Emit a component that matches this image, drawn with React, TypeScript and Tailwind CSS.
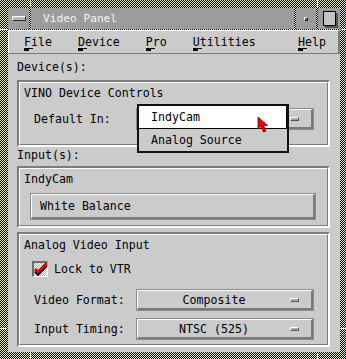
import type { ReactNode } from 'react'

const dither =
  'bg-[repeating-conic-gradient(#000_0_25%,#e6e6d2_0_50%)] bg-[length:2px_2px]'
const font = "font-['DejaVu_Sans_Mono',monospace] text-[11.6px] leading-[16px] text-black"

function Mnemonic({ children }: { children: string }): JSX.Element {
  return (
    <span className="relative inline-block">
      {children}
      <span className="absolute left-0 top-[14px] h-[1px] w-[9px] bg-black" />
      <span className="absolute left-0 top-[15px] h-[2px] w-[5px] bg-black" />
    </span>
  )
}

function MenuItem({ label, className }: { label: string; className?: string }): JSX.Element {
  return (
    <span className={className}>
      <Mnemonic>{label[0]}</Mnemonic>
      {label.slice(1)}
    </span>
  )
}

function Frame({ title, children, className }: { title: string; children: ReactNode; className?: string }): JSX.Element {
  return (
    <div className={`ml-[9px] mr-[10px] border-2 border-b-white border-l-[#7c7c7c] border-r-white border-t-[#7c7c7c] ${className ?? ''}`}>
      <div className="border border-b-[#7c7c7c] border-l-white border-r-[#7c7c7c] border-t-white px-[4px] pt-[2px]">
        <div>{title}</div>
        {children}
      </div>
    </div>
  )
}

function OptionButton({ value, hidden, className }: { value: string; hidden?: boolean; className?: string }): JSX.Element {
  return (
    <div className={`h-[22px] w-[178px] border border-[#8a8a8a] ${className ?? ''}`}>
      <div className="flex h-full items-center border-b-2 border-l border-r-2 border-t border-b-[#7a7a7a] border-l-white border-r-[#7a7a7a] border-t-white">
        <span className={`flex-1 text-center ${hidden ? 'invisible' : ''}`}>{value}</span>
        <span className="mr-[12px] h-[4px] w-[9px] border-b border-l border-r border-t border-b-[#555] border-l-white border-r-[#555] border-t-white bg-[#a8a8a8]" />
      </div>
    </div>
  )
}

function Checkbox(): JSX.Element {
  return (
    <div className="relative h-[16px] w-[16px] border-b border-l-2 border-r border-t-2 border-b-white border-l-[#6e6e6e] border-r-white border-t-[#6e6e6e]">
      <div className="h-full w-full bg-[repeating-conic-gradient(#ffffff_0_25%,#b4b4b4_0_50%)] bg-[length:2px_2px]" />
      <svg className="absolute left-[-1px] top-[-2px]" width="17" height="16" viewBox="0 0 17 16">
        <polyline points="2,9 5,12 14,3" fill="none" stroke="#000" strokeWidth="2.4" transform="translate(0,1.5)" />
        <polyline points="2,8 5,11 14,2" fill="none" stroke="#e00000" strokeWidth="2.8" />
      </svg>
    </div>
  )
}

export default function App(): JSX.Element {
  return (
    <div className={`relative h-[359px] w-[346px] overflow-hidden pb-[7px] pl-[8px] pr-[6px] pt-[8px] ${dither} ${font}`}>
      {/* resize handle ticks */}
      <span className="absolute left-[30px] top-0 h-[7px] w-[1px] bg-[#f4f4cc]" />
      <span className="absolute left-[317px] top-0 h-[7px] w-[1px] bg-[#f4f4cc]" />
      <span className="absolute left-0 top-[29px] h-[1px] w-[7px] bg-[#f4f4cc]" />
      <span className="absolute right-0 top-[29px] h-[1px] w-[5px] bg-[#f4f4cc]" />
      <span className="absolute left-0 top-[328px] h-[1px] w-[7px] bg-[#f4f4cc]" />
      <span className="absolute right-0 top-[328px] h-[1px] w-[5px] bg-[#f4f4cc]" />
      <span className="absolute bottom-0 left-[30px] h-[6px] w-[1px] bg-[#f4f4cc]" />
      <span className="absolute bottom-0 left-[317px] h-[6px] w-[1px] bg-[#f4f4cc]" />

      <div className="flex h-full flex-col gap-[1px]">
        {/* title bar */}
        <div className="flex h-[21px] gap-[2px]">
          <div className="flex w-[21px] items-center justify-center bg-[#9c9c9c]">
            <span className="h-[5px] w-[14px] border border-b-[#333] border-l-white border-r-[#333] border-t-white bg-[#b8b8b8]" />
          </div>
          <div className="flex flex-1 items-center bg-[#9c9c9c] pl-[12px] text-[11.2px] text-[#f4f4f4]">
            Video Panel
          </div>
          <div className="flex w-[20px] items-center justify-center bg-[#9c9c9c]">
            <span className="h-[4px] w-[4px] border border-b-[#222] border-l-white border-r-[#222] border-t-white bg-[#666]" />
          </div>
          <div className="flex w-[22px] items-center justify-center bg-[#9c9c9c]">
            <span className="h-[15px] w-[13px] border border-black bg-[#c4c4c4] shadow-[2px_2px_0_#555]" />
          </div>
        </div>

        {/* main window */}
        <div className="flex flex-1 flex-col bg-[#cbcbcb]">
          <div className="flex h-[24px] items-center gap-[26px] border-b border-l border-r-2 border-t border-b-[#7a7a7a] border-l-white border-r-[#7a7a7a] border-t-white pl-[15px] pr-[12px]">
            <MenuItem label="File" />
            <MenuItem label="Device" />
            <MenuItem label="Pro" />
            <MenuItem label="Utilities" />
            <MenuItem label="Help" className="ml-auto" />
          </div>

          <div className="mb-[5px] ml-[9px] mt-[5px]">Device(s):</div>
          <Frame title="VINO Device Controls">
            <div className="mb-[14px] mt-[7px] flex items-center pl-[10px]">
              <span className="w-[102px]">Default In:</span>
              <OptionButton value="IndyCam" hidden />
            </div>
          </Frame>

          <div className="mb-[3px] ml-[9px]">Input(s):</div>
          <Frame title="IndyCam">
            <div className="mb-[5px] ml-[6px] mr-[7px] mt-[6px] h-[27px] border border-[#8a8a8a]">
              <div className="flex h-full items-center border-b-2 border-l border-r-2 border-t border-b-[#7a7a7a] border-l-white border-r-[#7a7a7a] border-t-white pl-[8px]">
                White Balance
              </div>
            </div>
          </Frame>

          <Frame title="Analog Video Input" className="mt-[4px]">
            <div className="ml-[8px] mt-[8px] flex items-center gap-[6px]">
              <Checkbox />
              <span>Lock to VTR</span>
            </div>
            <div className="mt-[12px] flex items-center pl-[10px]">
              <span className="w-[102px]">Video Format:</span>
              <OptionButton value="Composite" />
            </div>
            <div className="mb-[4px] mt-[7px] flex items-center pl-[10px]">
              <span className="w-[102px]">Input Timing:</span>
              <OptionButton value="NTSC (525)" />
            </div>
          </Frame>
        </div>
      </div>

      {/* open option menu */}
      <div className="absolute left-[137px] top-[104px] w-[152px] border-2 border-[#111] bg-[#cbcbcb]">
        <div className="flex h-[23px] items-center border-b border-r border-black bg-white pl-[12px]">IndyCam</div>
        <div className="flex h-[22px] items-center pl-[12px]">Analog Source</div>
      </div>

      {/* pointer */}
      <svg className="absolute left-[257px] top-[116px]" width="13" height="18" viewBox="0 0 13 18">
        <path d="M1 1 L1 13 L4 10.5 L6.5 16 L9 15 L6.5 9.5 L10.5 9.5 Z" fill="#e80000" stroke="#8a0000" strokeWidth="0.8" />
      </svg>
    </div>
  )
}
